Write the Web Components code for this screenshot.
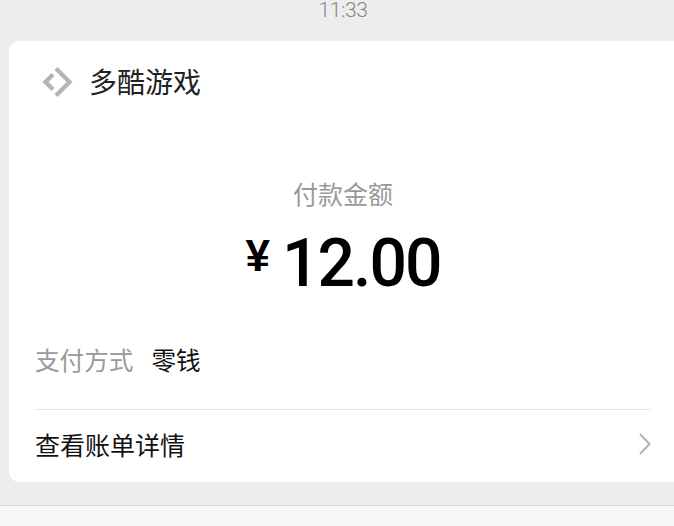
<!DOCTYPE html>
<html lang="zh"><head><meta charset="utf-8"><title>付款</title>
<style>
html,body{margin:0;padding:0;background:#ededed;}
body{width:674px;height:526px;overflow:hidden;font-family:"Noto Sans CJK SC","Noto Sans",sans-serif;}
</style></head><body>
<pay-screen>
  <chat-time slot="time">11:33</chat-time>
  <pay-card>
    <merchant-head slot="head">多酷游戏</merchant-head>
    <pay-amount slot="amount" label="付款金额" value="12.00"></pay-amount>
    <pay-method slot="method" label="支付方式">零钱</pay-method>
    <detail-row slot="detail">查看账单详情</detail-row>
  </pay-card>
</pay-screen>
<script>
function def(name,html){
  customElements.define(name,class extends HTMLElement{
    constructor(){super();const t=document.createElement('template');t.innerHTML=html;this.attachShadow({mode:'open'}).appendChild(t.content.cloneNode(true));}
  });
}
def('pay-screen',`<style>
:host{display:flex;flex-direction:column;width:674px;height:526px;overflow:hidden;background:#ededed}
.top{height:41px;flex:none;overflow:hidden}
.main{flex:none;height:441px;padding-left:9px}
.gap{height:23px;flex:none}
.bar{flex:1;background:#f7f7f7;border-top:1px solid #dcdcdc}
</style><div class="top"><slot name="time"></slot></div><div class="main"><slot></slot></div><div class="gap"></div><div class="bar"></div>`);
def('chat-time',`<style>
:host{display:block;text-align:center;padding-left:12px;font:300 21px/20px Roboto,"Liberation Sans",sans-serif;color:#888;letter-spacing:-.4px}
</style><slot></slot>`);
def('pay-card',`<style>
:host{display:flex;flex-direction:column;box-sizing:border-box;width:675px;height:441px;background:#fff;border-radius:10px;padding:0 33px 0 26px}
::slotted(*){flex:none}
</style><slot name="head"></slot><slot name="amount"></slot><slot name="method"></slot><slot name="detail"></slot>`);
def('merchant-head',`<style>
:host{display:flex;align-items:center;gap:16px;height:84px;margin-left:6px;font-size:28px;line-height:36px;color:#222}
svg{display:block;flex:none}
span{margin-top:-4px}
</style><svg width="32" height="32" viewBox="0 0 32 32" fill="none" stroke="#b5b5b5" stroke-width="4.400"><path d="M12 7.500 4.500 15 12 22.500"/><path d="M15 1.500 28.500 15 15 28.500"/></svg><span><slot></slot></span>`);
customElements.define('pay-amount',class extends HTMLElement{
  constructor(){super();this.attachShadow({mode:'open'}).innerHTML=`<style>
:host{display:flex;flex-direction:column;align-items:center;height:210px}
.l{margin-top:50px;font-size:25px;line-height:36px;color:#999}
.v{margin-top:23px;display:flex;align-items:flex-start;gap:12px;font-family:Roboto,"Liberation Sans",sans-serif;font-weight:500;color:#000}
.c{font-size:44px;line-height:44px;font-weight:700;font-family:"Liberation Sans",sans-serif}
.n{font-size:66px;line-height:60px;letter-spacing:-2px}
</style><div class="l"></div><div class="v"><span class="c">¥</span><span class="n"></span></div>`;}
  connectedCallback(){this.shadowRoot.querySelector('.l').textContent=this.getAttribute('label');this.shadowRoot.querySelector('.n').textContent=this.getAttribute('value');}
});
customElements.define('pay-method',class extends HTMLElement{
  constructor(){super();this.attachShadow({mode:'open'}).innerHTML=`<style>
:host{display:flex;align-items:center;gap:18px;height:48px;margin-bottom:26px;font-size:24.600px;line-height:36px;color:#111}
.l{color:#999}
</style><span class="l"></span><span><slot></slot></span>`;}
  connectedCallback(){this.shadowRoot.querySelector('.l').textContent=this.getAttribute('label');}
});
def('detail-row',`<style>
:host{display:flex;align-items:center;justify-content:space-between;box-sizing:border-box;height:73px;padding-bottom:4px;border-top:1px solid #e5e5e5;font-size:25px;line-height:36px;color:#111}
svg{display:block;flex:none}
</style><span><slot></slot></span><svg width="12" height="22" viewBox="0 0 12 22" fill="none" stroke="#b3b3b3" stroke-width="2"><path d="M1 1 10.500 11 1 21"/></svg>`);
</script>
</body></html>
